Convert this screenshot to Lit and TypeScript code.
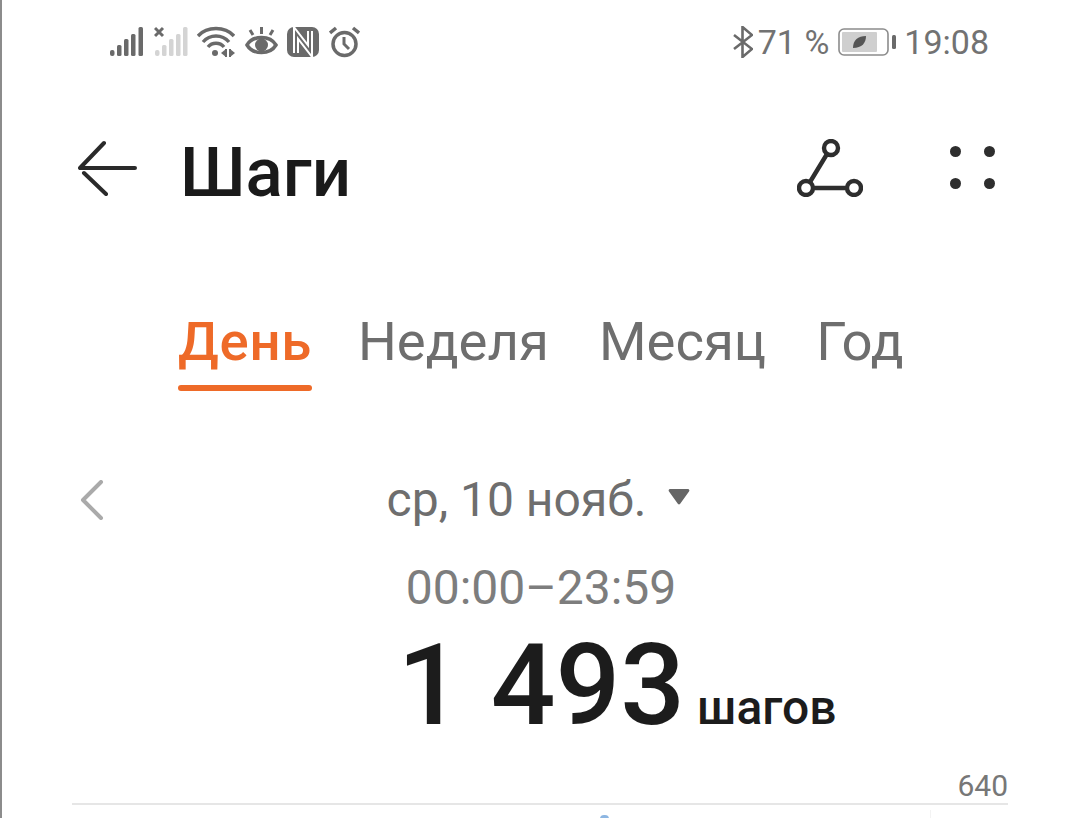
import { LitElement, html, css } from "lit";
import { customElement } from "lit/decorators.js";

@customElement("app-root")
export class AppRoot extends LitElement {
  static styles = css`
    :host {
      display: block;
      position: relative;
      width: 1080px;
      height: 818px;
      overflow: hidden;
      background: #fff;
      font-family: Roboto, "Noto Sans", sans-serif;
      color: #1a1a1a;
      box-sizing: border-box;
      border-left: 2px solid #8c8c8c;
    }
    svg {
      display: block;
      flex: none;
    }
    .status {
      height: 84px;
      display: flex;
      align-items: center;
      padding: 0 91px 0 108px;
      color: #6a6a6a;
    }
    .status-icons {
      display: flex;
      align-items: center;
      gap: 9.5px;
    }
    .status-right {
      margin-left: auto;
      display: flex;
      align-items: center;
      font-size: 34px;
      color: #727272;
    }
    .pct {
      margin: 0 9px 0 5px;
    }
    .time {
      margin-left: 8px;
    }
    .toolbar {
      height: 172px;
      display: flex;
      align-items: center;
      padding: 0 85px 0 76px;
      box-sizing: border-box;
    }
    .toolbar svg {
      margin-bottom: 4px;
    }
    h1 {
      margin: 4px 0 0 40px;
      font-size: 69px;
      font-weight: 500;
      line-height: 1;
    }
    .toolbar .share {
      margin-left: auto;
    }
    .toolbar .grid {
      margin-left: 87px;
    }
    .tabs {
      display: flex;
      gap: 50px;
      padding: 56px 0 0 176px;
      font-size: 54.500px;
      color: #6e6e6e;
      height: 158px;
      align-items: flex-start;
    }
    .tab {
      display: flex;
      flex-direction: column;
      align-items: stretch;
      line-height: 58px;
    }
    .tab.on {
      color: #ee6a28;
      font-weight: 500;
      letter-spacing: 0.7px;
      margin-right: -4px;
    }
    .tab.on::after {
      content: "";
      height: 6px;
      margin-top: 15px;
      border-radius: 3px;
      background: #ee6a28;
    }
    .date-row {
      position: relative;
      display: flex;
      justify-content: center;
      align-items: center;
      gap: 22px;
      font-size: 48px;
      line-height: 54px;
      color: #6e6e6e;
      height: 60px;
      padding-right: 5px;
    }
    .date-row .caret {
      margin-bottom: 6px;
    }
    .prev {
      position: absolute;
      left: 77px;
      top: 10px;
    }
    .range {
      text-align: center;
      font-size: 48px;
      line-height: 54px;
      color: #7d7d7d;
      margin-top: 31px;
    }
    .total {
      display: flex;
      justify-content: center;
      align-items: baseline;
      gap: 12px;
      margin-top: 13px;
      padding-left: 152px;
      line-height: 114px;
      font-weight: 500;
      color: #1c1c1c;
    }
    .num {
      font-size: 114px;
    }
    .unit {
      font-size: 48px;
    }
    .chart-head {
      margin: 5px 72px 0 70px;
      text-align: right;
      font-size: 30px;
      line-height: 32px;
      color: #777;
      border-bottom: 2px solid #e6e6e6;
      padding-bottom: 1px;
    }
    .peak {
      position: absolute;
      left: 598px;
      top: 815px;
      width: 9px;
      height: 6px;
      border-radius: 4px 4px 0 0;
      background: #8db6e2;
    }
    .tick {
      position: absolute;
      left: 928px;
      top: 810px;
      width: 1px;
      height: 8px;
      background: #f3f3f3;
    }
  `;

  render() {
    return html`
      <div class="status">
        <div class="status-icons">
          <svg width="34" height="32" viewBox="0 0 34 32" fill="#6a6a6a">
            <rect x="0" y="24" width="4.500" height="6" rx="2" />
            <rect x="7" y="19" width="4.500" height="11" rx="1.500" />
            <rect x="14" y="13" width="4.500" height="17" rx="1.500" />
            <rect x="21" y="8" width="4.500" height="22" rx="1.500" />
            <rect x="28.500" y="1" width="4.500" height="29" rx="1.500" />
          </svg>
          <svg width="34" height="32" viewBox="0 0 34 32" fill="#d4d4d4">
            <rect x="1" y="24" width="4.500" height="6" rx="2" />
            <rect x="8" y="19" width="4.500" height="11" rx="1.500" />
            <rect x="15" y="13" width="4.500" height="17" rx="1.500" />
            <rect x="22" y="8" width="4.500" height="22" rx="1.500" />
            <rect x="29" y="1" width="4.500" height="29" rx="1.500" />
            <path d="M1 2l8 8M9 2l-8 8" stroke="#6a6a6a" stroke-width="3" fill="none" />
          </svg>
          <svg width="38" height="32" viewBox="0 0 38 32" fill="none" stroke="#6a6a6a" stroke-width="3.400">
            <path d="M1 10C10 0 28 0 37 10" />
            <path d="M6 16C13 8 25 8 32 16" />
            <path d="M11 21C15 16 23 16 27 21" />
            <circle cx="18" cy="27" r="3" fill="#6a6a6a" stroke="none" />
            <path d="M29 23v8M33 23v8" stroke-width="2" />
            <path d="M24 27l5-4v8zM38 27l-5-4v8z" fill="#6a6a6a" stroke="none" />
          </svg>
          <svg width="33" height="32" viewBox="0 0 33 32" fill="none" stroke="#6a6a6a" stroke-width="3.500">
            <path d="M2 19C8 9 25 9 31 19C25 29 8 29 2 19Z" />
            <circle cx="16.500" cy="19" r="6.500" fill="#6a6a6a" stroke="none" />
            <path d="M16.500 1v7M5 4l3 5M28 4l-3 5" stroke-width="3" />
          </svg>
          <svg width="32" height="32" viewBox="0 0 32 32">
            <rect x="0" y="1" width="32" height="30" rx="7" fill="#6a6a6a" />
            <path d="M9 27V7L23 25V5" fill="none" stroke="#fff" stroke-width="6" />
            <path d="M9 27V7L23 25V5" fill="none" stroke="#6a6a6a" stroke-width="2" />
          </svg>
          <svg width="31" height="32" viewBox="0 0 31 32" fill="none" stroke="#6a6a6a" stroke-width="3.500">
            <circle cx="15.500" cy="18" r="11.500" />
            <path d="M15 11v7l5 5" stroke-width="3" />
            <path d="M1 7l6-5M30 7l-6-5" />
          </svg>
        </div>
        <div class="status-right">
          <svg width="20" height="32" viewBox="0 0 20 32" fill="none" stroke="#6a6a6a" stroke-width="2.600">
            <path d="M1 9L19 23L9.500 31V1L19 9L1 23" />
          </svg>
          <span class="pct">71 %</span>
          <svg width="58" height="28" viewBox="0 0 58 28">
            <rect x="1" y="1" width="49" height="26" rx="5" fill="#fff" stroke="#8c8c8c" stroke-width="1.600" />
            <rect x="4" y="4" width="35" height="20" rx="1" fill="#cfcfcf" />
            <path d="M15 20C15 12 20 8 28 8C28 15 24 20 15 20Z" fill="#555" />
            <rect x="54" y="7" width="4" height="14" rx="1.500" fill="#6a6a6a" />
          </svg>
          <span class="time">19:08</span>
        </div>
      </div>

      <div class="toolbar">
        <svg width="62" height="56" viewBox="0 0 62 56" fill="none" stroke="#2a2a2a" stroke-width="4" stroke-linecap="round">
          <path d="M2 28H57M26 3L2 28M6 33L28 54" />
        </svg>
        <h1>Шаги</h1>
        <svg class="share" width="66" height="58" viewBox="0 0 66 58" fill="none" stroke="#2e2e2e" stroke-width="4.400">
          <circle cx="34" cy="9" r="7" />
          <circle cx="9" cy="49" r="7" />
          <circle cx="57" cy="49" r="7" />
          <path d="M30 15L13 43M16 49H50" />
        </svg>
        <svg class="grid" width="45" height="44" viewBox="0 0 45 44" fill="#2e2e2e">
          <circle cx="5.500" cy="5.500" r="5.500" />
          <circle cx="39.500" cy="5.500" r="5.500" />
          <circle cx="5.500" cy="37.500" r="5.500" />
          <circle cx="39.500" cy="37.500" r="5.500" />
        </svg>
      </div>

      <div class="tabs">
        <div class="tab on">День</div>
        <div class="tab">Неделя</div>
        <div class="tab">Месяц</div>
        <div class="tab">Год</div>
      </div>

      <div class="date-row">
        <svg class="prev" width="26" height="40" viewBox="0 0 26 40" fill="none" stroke="#aaa" stroke-width="4" stroke-linecap="round" stroke-linejoin="round">
          <path d="M22 2L4 20L22 38" />
        </svg>
        <span>ср, 10 нояб.</span>
        <svg class="caret" width="22" height="18" viewBox="0 0 22 18" fill="#666">
          <path d="M2 1H20a1.500 1.500 0 0 1 1 2.500L12 16a1.500 1.500 0 0 1-2 0L1 3.500A1.500 1.500 0 0 1 2 1Z" />
        </svg>
      </div>
      <div class="range">00:00–23:59</div>
      <div class="total">
        <span class="num">1 493</span>
        <span class="unit">шагов</span>
      </div>
      <div class="chart-head">640</div>
      <div class="peak"></div>
      <div class="tick"></div>
    `;
  }
}
